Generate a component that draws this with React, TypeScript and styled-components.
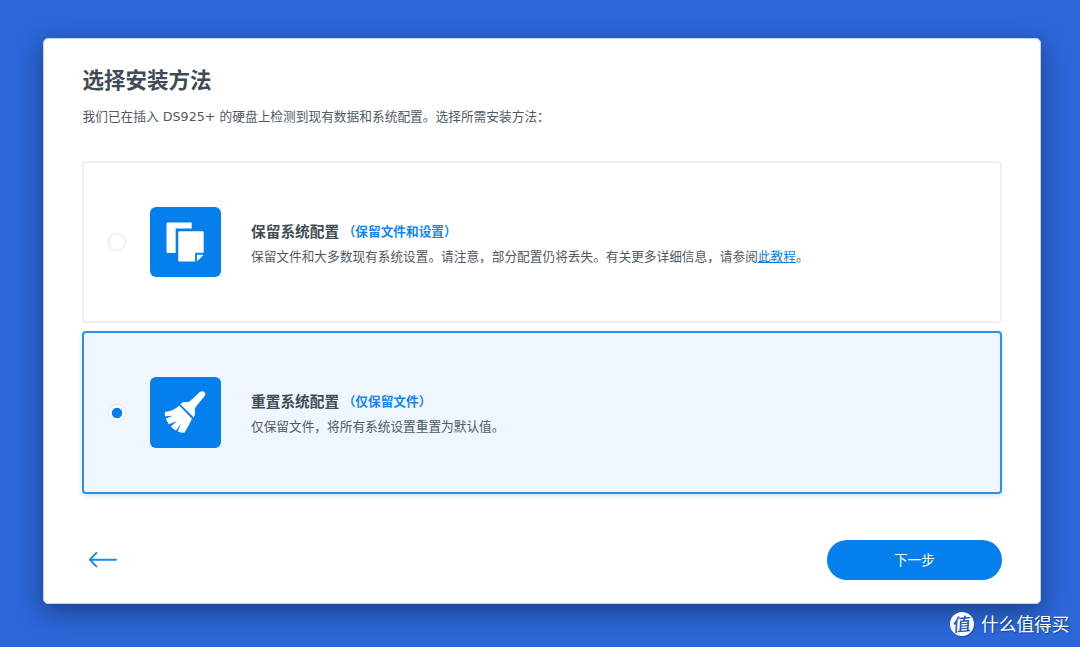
import React, { useState } from 'react';
import styled, { createGlobalStyle } from 'styled-components';

const GlobalStyle = createGlobalStyle`
  * { box-sizing: border-box; }
  html, body { margin: 0; height: 100%; }
  body {
    background: #2b67d8;
    font-family: "DejaVu Sans", "Noto Sans CJK SC", sans-serif;
    color: #505a64;
    overflow: hidden;
  }
`;

const cjk = '"Noto Sans CJK SC", sans-serif';

const Page = styled.div`
  position: relative;
  width: 1080px;
  height: 647px;
  padding: 38px 39px 0 43px;
`;

const Panel = styled.main`
  display: flex;
  flex-direction: column;
  width: 998px;
  height: 566px;
  padding: 24px 39px 23px 38.5px;
  border: 1px solid #c3d2ee;
  border-radius: 5px;
  background: #fff;
  box-shadow: 0 7px 24px rgba(20, 36, 76, 0.6);
`;

const Heading = styled.h1`
  margin: 0;
  font: 700 21.5px/32px ${cjk};
  color: #414b55;
`;

const Intro = styled.p`
  margin: 12px 0 0;
  font-size: 12.71px;
  line-height: 20px;
  white-space: nowrap;
`;

const Options = styled.div`
  display: flex;
  flex-direction: column;
  gap: 8px;
  margin: 34px -1px 0 -0.5px;
`;

const Option = styled.label<{ $active: boolean }>`
  display: flex;
  align-items: center;
  height: 162.4px;
  padding-left: 24px;
  border: 2px solid ${p => (p.$active ? '#2b8fec' : '#eff0f1')};
  border-radius: 4px;
  background: ${p => (p.$active ? '#eff6ff' : '#fff')};
  box-shadow: ${p => (p.$active ? '0 2px 5px rgba(5, 127, 235, 0.2)' : 'none')};
`;

const Radio = styled.input`
  appearance: none;
  flex: none;
  width: 18px;
  height: 18px;
  margin: 0 24px 0 0;
  border: 1px solid #dae3ed;
  border-radius: 50%;
  background: #fff;
  &:checked {
    border-color: #e1e7ed;
    background: radial-gradient(circle, #057feb 4.8px, #fff 5.6px);
  }
`;

const Tile = styled.svg`
  flex: none;
  width: 71px;
  height: 70.5px;
  margin-right: 30px;
  border-radius: 6px;
  background: #057feb;
`;

const OptionBody = styled.div`
  padding-top: 1px;
`;

const OptionTitle = styled.div`
  display: flex;
  align-items: center;
  height: 25px;
  font: 700 14.7px/25px ${cjk};
  color: #414b55;
`;

const Note = styled.span`
  margin-left: 3.5px;
  font-size: 12.68px;
  color: #1187f5;
`;

const OptionText = styled.div`
  font: 400 12.68px/25px ${cjk};
  white-space: nowrap;
`;

const Link = styled.a`
  color: #057feb;
  text-decoration: underline;
`;

const Footer = styled.footer`
  display: flex;
  align-items: center;
  justify-content: space-between;
  margin: auto -1px 0 5px;
`;

const BackButton = styled.button`
  display: flex;
  padding: 0;
  border: 0;
  background: none;
`;

const NextButton = styled.button`
  width: 175px;
  height: 40px;
  padding: 0 0 2px;
  border: 0;
  border-radius: 20px;
  background: #057feb;
  color: #fff;
  font: 400 13.6px/38px ${cjk};
`;

const Brand = styled.div`
  position: absolute;
  left: 950px;
  top: 610px;
  display: flex;
  align-items: center;
  gap: 7px;
  color: #fff;
  font: 400 17.7px/26px ${cjk};
  text-shadow: 1px 1px 1px rgba(15, 40, 100, 0.6);
`;

const BrandMark = styled.span`
  display: grid;
  place-items: center;
  width: 24px;
  height: 24px;
  margin-top: 2px;
  border-radius: 50%;
  background: #fff;
  color: #2458b8;
  font: 500 18px/22px ${cjk};
  text-shadow: none;
  box-shadow: 1px 1px 1px rgba(15, 40, 100, 0.4);
`;

const BrandGlyph = styled.span`
  height: 24px;
  transform: skewX(-8deg) rotate(-5deg);
`;

const FilesIcon = () => (
  <Tile viewBox="0 0 71 71" fill="#fff">
    <path d="M17.2 15.7H41.7V21.6H25.6V46.3H17.2Q16.4 46.3 16.4 45.5V16.5Q16.4 15.7 17.2 15.7Z" />
    <path d="M29 24.4H53Q53.8 24.4 53.8 25.2V46.2H45.2V55H29Q28.2 55 28.2 54.2V25.2Q28.2 24.4 29 24.4Z" />
    <path d="M47 48H53.8L47 54.8Z" />
  </Tile>
);

const BrushIcon = () => (
  <Tile viewBox="0 0 71 71" fill="#fff">
    <path d="M30.3 27.4Q32.3 24.7 35.8 25.2Q38.6 25.7 40.2 24.2L49.6 15.4Q52.4 13.3 54.6 15Q56.4 17.2 54.4 19.7L46.3 29.4Q44.4 31.5 45.1 34.6Q45.8 37.5 43.8 40.8Z" />
    <path d="M29.2 28.7L42 42.1Q38.6 49.8 34.4 56.2Q31 56.4 27.6 54.7L31.2 47.2L25.9 53.9Q23 52.3 20.8 49.8L27 44.2L18.7 47.5Q16.8 45.1 15.8 41.9L22.8 39L15.1 39.6Q14.5 37.3 14.6 35.2Q23.2 34.4 29.2 28.7Z" />
  </Tile>
);

export default function App() {
  const [choice, setChoice] = useState('reset');
  return (
    <>
      <GlobalStyle />
      <Page>
        <Panel>
          <Heading>选择安装方法</Heading>
          <Intro>我们已在插入 DS925+ 的硬盘上检测到现有数据和系统配置。选择所需安装方法：</Intro>
          <Options>
            <Option $active={choice === 'keep'}>
              <Radio type="radio" name="method" checked={choice === 'keep'} onChange={() => setChoice('keep')} />
              <FilesIcon />
              <OptionBody>
                <OptionTitle>保留系统配置<Note>（保留文件和设置）</Note></OptionTitle>
                <OptionText>
                  保留文件和大多数现有系统设置。请注意，部分配置仍将丢失。有关更多详细信息，请参阅<Link>此教程</Link>。
                </OptionText>
              </OptionBody>
            </Option>
            <Option $active={choice === 'reset'}>
              <Radio type="radio" name="method" checked={choice === 'reset'} onChange={() => setChoice('reset')} />
              <BrushIcon />
              <OptionBody>
                <OptionTitle>重置系统配置<Note>（仅保留文件）</Note></OptionTitle>
                <OptionText>仅保留文件，将所有系统设置重置为默认值。</OptionText>
              </OptionBody>
            </Option>
          </Options>
          <Footer>
            <BackButton aria-label="返回">
              <svg width="30" height="18" viewBox="0 0 30 18" fill="none" stroke="#168af0" strokeWidth="1.9" strokeLinecap="round" strokeLinejoin="round">
                <path d="M28 8.7H1.8M8.4 2L1.8 8.7L8.4 15.4" />
              </svg>
            </BackButton>
            <NextButton>下一步</NextButton>
          </Footer>
        </Panel>
        <Brand>
          <BrandMark><BrandGlyph>值</BrandGlyph></BrandMark>
          什么值得买
        </Brand>
      </Page>
    </>
  );
}
